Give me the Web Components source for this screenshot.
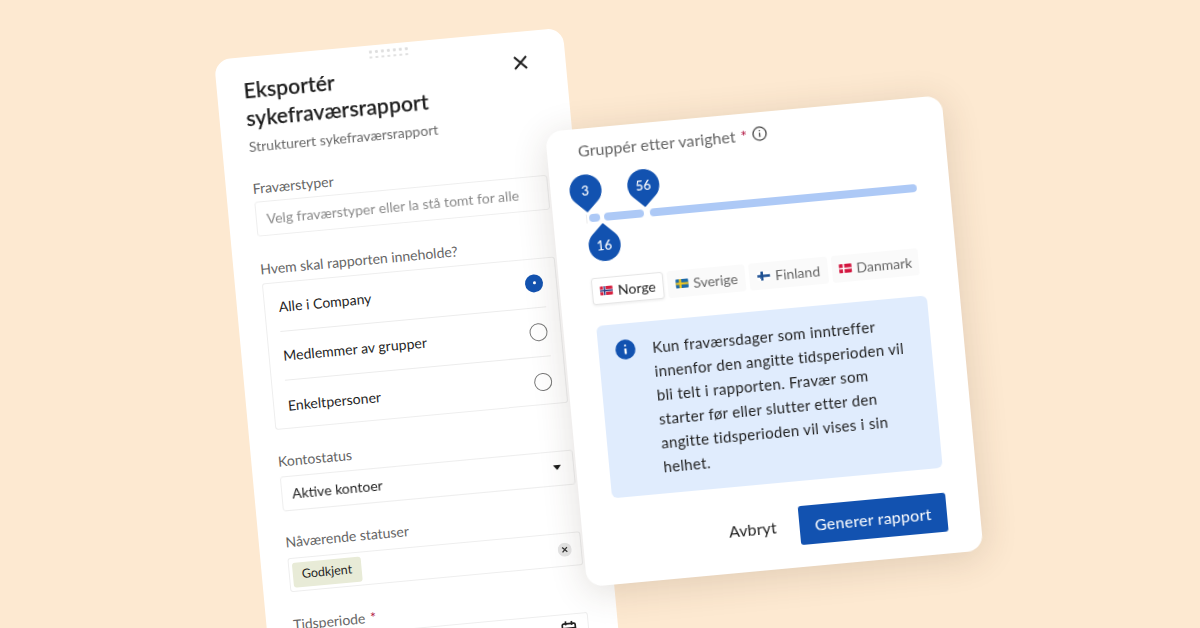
<!DOCTYPE html>
<html lang="no"><head><meta charset="utf-8"><title>Sykefraværsrapport</title>
<style>
html,body{margin:0;padding:0;width:1200px;height:628px;overflow:hidden;background:#fde9d1;font-family:"Lato","Liberation Sans",sans-serif;color:#1f1f1f}
</style></head><body>
<x-scene>
  <x-window style="--x:213.8px;--y:60px;--w:350px;--h:700px;--pl:26.7px;--pr:29.3px;--pt:2px">
    <x-export-head title-a="Eksportér" title-b="sykefraværsrapport" sub="Strukturert sykefraværsrapport"></x-export-head>
    <x-field label="Fraværstyper" style="--top:22px;--gap:3px"><x-box h="35">
      <span style="color:#8b8b8b;letter-spacing:.03px">Velg fraværstyper eller la stå tomt for alle</span></x-box></x-field>
    <x-field label="Hvem skal rapporten inneholde?" style="--top:22.5px;--gap:4px">
      <x-radios>
        <x-radio-row checked>Alle i Company</x-radio-row>
        <x-radio-row>Medlemmer av grupper</x-radio-row>
        <x-radio-row last>Enkeltpersoner</x-radio-row>
      </x-radios></x-field>
    <x-field label="Kontostatus" style="--top:22px;--gap:5px"><x-box h="35" kind="select"><span style="color:#1f1f1f">Aktive kontoer</span></x-box></x-field>
    <x-field label="Nåværende statuser" style="--top:21px;--gap:6px"><x-box h="34" kind="tags"><x-chip>Godkjent</x-chip></x-box></x-field>
    <x-field label="Tidsperiode" required style="--top:22.5px;--gap:4.5px"><x-box h="35" kind="date"></x-box></x-field>
  </x-window>

  <x-window style="--x:544.7px;--y:131.5px;--w:398px;--h:457px;--pl:31px;--pr:33px;--pt:3.5px" elevated>
    <x-field label="Gruppér etter varighet" required info style="--top:8px;--gap:0px">
      <x-slider></x-slider>
      <x-tabs>
        <x-tab code="no" active w="72">Norge</x-tab>
        <x-tab code="se" w="78">Sverige</x-tab>
        <x-tab code="fi" w="79">Finland</x-tab>
        <x-tab code="dk" w="87">Danmark</x-tab>
      </x-tabs>
    </x-field>
    <x-note>Kun fraværsdager som inntreffer innenfor den angitte tidsperioden vil bli telt i rapporten. Fravær som starter før eller slutter etter den angitte tidsperioden vil vises i sin helhet.</x-note>
    <x-actions></x-actions>
  </x-window>
</x-scene>
<script>
const el=(name,css,html,init)=>{customElements.define(name,class extends HTMLElement{
  connectedCallback(){ if(this.shadowRoot) return; const r=this.attachShadow({mode:'open'});
    r.innerHTML=`<style>${css}</style>${typeof html==='function'?html(this):html}`; init&&init(this,r);} });};

el('x-scene',`:host{display:block;position:relative;width:1200px;height:628px;overflow:hidden;filter:blur(.3px)}`,`<slot></slot>`);

el('x-window',`:host{display:flex;flex-direction:column;position:absolute;left:var(--x);top:var(--y);width:var(--w);height:var(--h);
  box-sizing:border-box;padding:var(--pt) var(--pr) 0 var(--pl);background:#fff;border-radius:16px;transform:rotate(-5.3deg);transform-origin:0 0}
  :host([elevated]){box-shadow:0 6px 36px rgba(70,50,30,.16)}`,`<slot></slot>`);

el('x-export-head',`:host{display:block;position:relative}
  .dots{position:absolute;left:50%;top:3px;margin-left:-18.5px;display:grid;grid-template-columns:repeat(7,2.5px);gap:3px 3.5px}
  .dots i{width:2.5px;height:2.5px;border-radius:50%;background:#dedede}
  .x{position:absolute;right:8.7px;top:21.5px;width:14px;height:14px}
  h1{margin:17px 0 0;font-size:21px;line-height:28px;font-weight:500;letter-spacing:.2px;color:#1c1c1c;-webkit-text-stroke:.25px #1c1c1c}
  p{margin:5px 0 0;font-size:14px;line-height:20px;color:#6a6a6a;letter-spacing:0}`,
  h=>`<div class="dots">${'<i></i>'.repeat(14)}</div>
  <svg class="x" viewBox="0 0 14 14"><path d="M1 1 13 13M13 1 1 13" stroke="#1c1c1c" stroke-width="2" fill="none"/></svg>
  <h1>${h.getAttribute('title-a')}<br>${h.getAttribute('title-b')}</h1><p>${h.getAttribute('sub')}</p>`);

el('x-field',`:host{display:block;margin-top:var(--top,20px)}
  .l{display:flex;align-items:center;font-size:14px;line-height:20px;color:#666;letter-spacing:0;margin-bottom:var(--gap,4px)}
  :host([info]) .l{font-size:16px;letter-spacing:.07px}
  .r{color:#b0123f;margin-left:5px}
  svg{margin-left:5px;width:15px;height:15px}`,
  f=>`<div class="l"><span>${f.getAttribute('label')}</span>${f.hasAttribute('required')?'<span class="r">*</span>':''}${f.hasAttribute('info')?'<svg viewBox="0 0 16 16" fill="none" stroke="#444" stroke-width="1.4"><circle cx="8" cy="8" r="7"/><path d="M8 7v4.5"/><path d="M8 4.2v1.2"/></svg>':''}</div><slot></slot>`);

el('x-box',`:host{display:flex;align-items:center;position:relative;box-sizing:border-box;border:1px solid #eeeeee;border-radius:3px;padding:0 10px 0 10px;font-size:14px;line-height:20px}
  .caret{position:absolute;right:12px;top:13px;width:0;height:0;border:4px solid transparent;border-top:5px solid #1a1a1a;border-bottom:0}
  .clear{position:absolute;right:9px;top:9px;width:14px;height:14px}
  .cal{position:absolute;right:11px;top:6px;width:16px;height:18px}
  :host([kind=tags]){padding-left:3px}`,
  b=>{const k=b.getAttribute('kind');return `<style>:host{height:${b.getAttribute('h')}px}</style><slot></slot>`+
   (k==='select'?'<i class="caret"></i>':'')+
   (k==='tags'?'<svg class="clear" viewBox="0 0 14 14"><circle cx="7" cy="7" r="7" fill="#e4e4e4"/><path d="M4.6 4.6 9.4 9.4M9.4 4.6 4.6 9.4" stroke="#333" stroke-width="1.3"/></svg>':'')+
   (k==='date'?'<svg class="cal" viewBox="0 0 16 18" fill="none" stroke="#222" stroke-width="1.7"><rect x="1.5" y="3" width="13" height="13" rx="1.5"/><path d="M1.5 7.5h13M5 .5v4M11 .5v4"/></svg>':'')});

el('x-chip',`:host{display:inline-flex;align-items:center;justify-content:center;width:69px;height:25px;background:#e8ebd7;border-radius:3px;font-size:12.5px;letter-spacing:0;color:#1f1f1f}`,`<slot></slot>`);

el('x-radios',`:host{display:block;box-sizing:border-box;height:147.5px;border:1px solid #eeeeee;border-radius:3px;padding:0 12px 0 13px}`,`<slot></slot>`);

el('x-radio-row',`:host{display:flex;align-items:center;justify-content:space-between;height:49.3px;box-sizing:border-box;border-bottom:1px solid #ececec;font-size:14px;letter-spacing:.05px;color:#1f1f1f;padding-left:1px}
  :host([last]){border-bottom:0}
  i{display:block;box-sizing:border-box;width:18px;height:18px;border-radius:50%;border:1.5px solid #777;margin-right:.5px}
  :host([checked]) i{border:0;background:#1252b0;position:relative}
  :host([checked]) i::after{content:"";position:absolute;left:7.5px;top:7.5px;width:3px;height:3px;border-radius:50%;background:#fff}`,
  `<span><slot></slot></span><i></i>`);

el('x-slider',`:host{display:block;position:relative;height:118px;box-sizing:border-box;padding:54px 0 0 5px}
  .t{display:flex;height:8px}.t b{display:block;height:8px;background:#adc9f6;border-radius:4px}
  .tick{position:absolute;left:2px;top:54px;width:1px;height:9px;background:#ececec}`,
  `<i class="tick"></i><div class="t"><b style="width:11px"></b><b style="width:40px;margin-left:4px"></b><b style="width:268px;margin-left:6px"></b></div>
   <x-pin style="--cx:3.7px;--cy:30.5px">3</x-pin><x-pin style="--cx:62px;--cy:30.5px">56</x-pin><x-pin style="--cx:17.7px;--cy:86px" flip>16</x-pin>`);

el('x-pin',`:host{position:absolute;left:calc(var(--cx) - 16px);top:calc(var(--cy) - 16px);width:32px;height:32px;display:flex;align-items:center;justify-content:center;color:#fff;font-size:13px;font-weight:500;letter-spacing:.2px}
  svg{position:absolute;left:0;top:0;width:32px;height:38px;overflow:visible}
  :host([flip]) svg{transform:scaleY(-1);transform-origin:16px 16px}
  span{position:relative}`,
  `<svg viewBox="0 0 32 38"><path fill="#1252b0" d="M16 38 5 27.6A16 16 0 1 1 27 27.6Z"/></svg><span><slot></slot></span>`);

el('x-tabs',`:host{display:flex;gap:4px;margin-top:0;padding-left:1px}`,`<slot></slot>`);

const flags={
 no:'<rect width="14" height="10" fill="#d8203f"/><path d="M0 5h14M5 0v10" stroke="#fff" stroke-width="3"/><path d="M0 5h14M5 0v10" stroke="#2a3f85" stroke-width="1.5"/>',
 se:'<rect width="14" height="10" fill="#1d6aa8"/><path d="M0 5h14M5 0v10" stroke="#f4c81e" stroke-width="2.4"/>',
 fi:'<rect width="14" height="10" fill="#fff"/><path d="M0 5h14M5 0v10" stroke="#1c4f92" stroke-width="2.8"/>',
 dk:'<rect width="14" height="10" fill="#d3163f"/><path d="M0 5h14M5 0v10" stroke="#fff" stroke-width="1.8"/>'};
el('x-tab',`:host{display:flex;align-items:center;justify-content:center;gap:5px;box-sizing:border-box;height:27px;border-radius:3px;background:#fafafa;color:#666;font-size:14px;letter-spacing:0}
  :host([active]){background:#fff;color:#1f1f1f;border:1px solid #e6e6e6;box-shadow:0 1px 3px rgba(0,0,0,.08)}
  svg{width:13px;height:9px;border-radius:1px}`,
  t=>`<style>:host{width:${t.getAttribute('w')}px}</style><svg viewBox="0 0 14 10">${flags[t.getAttribute('code')]}</svg><slot></slot>`);

el('x-note',`:host{display:flex;align-items:flex-start;gap:17px;box-sizing:border-box;height:173px;margin:21px 0 0 1.5px;padding:14px 16px 0 17.5px;background:#e0ecfd;border-radius:6px;font-size:15px;line-height:24px;letter-spacing:.33px;color:#1f1f1f}
  svg{flex:none;width:20px;height:20px;margin-top:2px}
  div{width:257px}`,
  `<svg viewBox="0 0 20 20"><circle cx="10" cy="10" r="10" fill="#1252b0"/><path d="M10 9v5.5M10 5.2v1.6" stroke="#fff" stroke-width="2.2"/></svg><div><slot></slot></div>`);

el('x-actions',`:host{display:flex;justify-content:flex-end;align-items:center;gap:23px;margin-top:25.5px}
  span{font-size:16px;color:#1f1f1f;letter-spacing:.1px;margin-top:-2px}
  b{display:flex;align-items:center;justify-content:center;width:148px;height:39px;border-radius:3px;background:#1252b0;color:#fff;font-size:16px;font-weight:400;letter-spacing:.25px}`,
  `<span>Avbryt</span><b>Generer rapport</b>`);
</script>
</body></html>
